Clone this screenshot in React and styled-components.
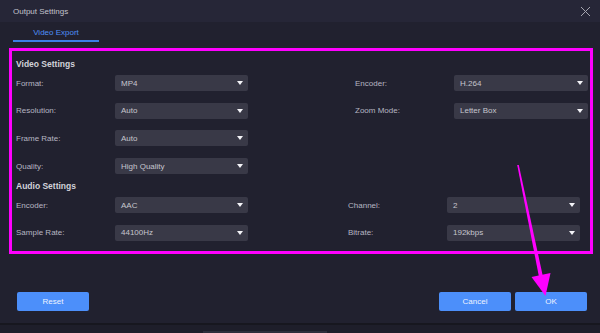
import React from "react";
import styled, { createGlobalStyle } from "styled-components";

const Global = createGlobalStyle`
  html, body { margin: 0; padding: 0; background: #21212f; }
  body { font-family: "Liberation Sans", Arial, sans-serif; }
  #root { width: 600px; height: 333px; overflow: hidden; }
`;

const Window = styled.div`
  position: relative;
  width: 600px;
  height: 333px;
  background: #21212f;
  display: flex;
  flex-direction: column;
`;

const TitleBar = styled.div`
  height: 22px;
  flex: none;
  background: #262637;
  display: flex;
  align-items: center;
  justify-content: space-between;
  padding: 0 9px 0 13px;
  color: #c2c2cc;
  font-size: 8px;
`;

const CloseButton = styled.div`
  width: 11px;
  height: 11px;
  display: flex;
  align-items: center;
  justify-content: center;
`;

const TabBar = styled.div`
  height: 22px;
  flex: none;
  display: flex;
  padding-left: 13px;
`;

const Tab = styled.div`
  width: 86px;
  height: 20px;
  border-bottom: 2px solid #3c7ee6;
  display: flex;
  align-items: center;
  justify-content: center;
  padding-top: 3px;
  box-sizing: border-box;
  color: #4f8ff7;
  font-size: 8px;
`;

const Highlight = styled.div`
  margin: 4px 7px 0 9px;
  border: 3px solid #ff00ff;
  padding: 7px 0 10px 4px;
  display: flex;
  flex-direction: column;
`;

const SectionTitle = styled.div`
  font-weight: bold;
  font-size: 8.5px;
  line-height: 12px;
  height: 12px;
  color: #d2d2da;
  margin-top: ${(p) => p.$top || 0}px;
  margin-bottom: 5px;
`;

const Grid = styled.div`
  display: grid;
  grid-template-columns: ${(p) => p.$cols};
  grid-auto-rows: 16px;
  row-gap: 11.7px;
  align-items: center;
`;

const Label = styled.div`
  font-size: 8px;
  color: #b6b6c2;
  grid-column: ${(p) => p.$col};
`;

const Select = styled.div`
  grid-column: ${(p) => p.$col};
  height: 16px;
  background: #393947;
  border-radius: 2px;
  display: flex;
  align-items: center;
  justify-content: space-between;
  padding: 0 5px 0 6px;
  font-size: 8px;
  color: #c6c6ce;
`;

const Caret = styled.span`
  width: 0;
  height: 0;
  border-left: 3px solid transparent;
  border-right: 3px solid transparent;
  border-top: 4px solid #f4f4f8;
`;

const Footer = styled.div`
  flex: 1;
  display: flex;
  align-items: flex-start;
  padding: 38px 13px 0 17px;
  gap: 4px;
`;

const Spacer = styled.div`
  flex: 1;
`;

const Button = styled.div`
  width: 72px;
  height: 19px;
  background: #4c8ffa;
  border-radius: 2px;
  display: flex;
  align-items: center;
  justify-content: center;
  color: #eef3ff;
  font-size: 8px;
`;

const StatusStrip = styled.div`
  height: 8px;
  flex: none;
  border-top: 2px solid #17171f;
  background: #1e1e2a;
  display: flex;
  align-items: flex-end;
  padding-left: 203px;
`;

const ScrollThumb = styled.div`
  width: 124px;
  height: 2px;
  background: #2e2e3c;
`;

const Annotation = styled.svg`
  position: absolute;
  left: 0;
  top: 0;
  pointer-events: none;
`;

function Dropdown({ col, value }) {
  return (
    <Select $col={col}>
      <span>{value}</span>
      <Caret />
    </Select>
  );
}

export default function App() {
  return (
    <Window>
      <Global />
      <TitleBar>
        <span>Output Settings</span>
        <CloseButton>
          <svg width="11" height="11" viewBox="0 0 11 11">
            <path d="M1 1 L10 10 M10 1 L1 10" stroke="#a4a4ae" strokeWidth="1" />
          </svg>
        </CloseButton>
      </TitleBar>
      <TabBar>
        <Tab>Video Export</Tab>
      </TabBar>
      <Highlight>
        <SectionTitle>Video Settings</SectionTitle>
        <Grid $cols="99px 133px 107px 99px 134px">
          <Label $col="1">Format:</Label>
          <Dropdown col="2" value="MP4" />
          <Label $col="4">Encoder:</Label>
          <Dropdown col="5" value="H.264" />
          <Label $col="1">Resolution:</Label>
          <Dropdown col="2" value="Auto" />
          <Label $col="4">Zoom Mode:</Label>
          <Dropdown col="5" value="Letter Box" />
          <Label $col="1">Frame Rate:</Label>
          <Dropdown col="2" value="Auto" />
          <Label $col="1">Quality:</Label>
          <Dropdown col="2" value="High Quality" />
        </Grid>
        <SectionTitle $top={6}>Audio Settings</SectionTitle>
        <Grid $cols="99px 133px 100px 99px 133px">
          <Label $col="1">Encoder:</Label>
          <Dropdown col="2" value="AAC" />
          <Label $col="4">Channel:</Label>
          <Dropdown col="5" value="2" />
          <Label $col="1">Sample Rate:</Label>
          <Dropdown col="2" value="44100Hz" />
          <Label $col="4">Bitrate:</Label>
          <Dropdown col="5" value="192kbps" />
        </Grid>
      </Highlight>
      <Footer>
        <Button>Reset</Button>
        <Spacer />
        <Button>Cancel</Button>
        <Button>OK</Button>
      </Footer>
      <StatusStrip>
        <ScrollThumb />
      </StatusStrip>
      <Annotation width="600" height="333" viewBox="0 0 600 333">
        <polygon points="517.2,165 518.8,165 542.8,276 538.8,276" fill="#ff00ff" />
        <polygon points="531.5,277 550.5,273 545.5,296" fill="#ff00ff" />
      </Annotation>
    </Window>
  );
}
